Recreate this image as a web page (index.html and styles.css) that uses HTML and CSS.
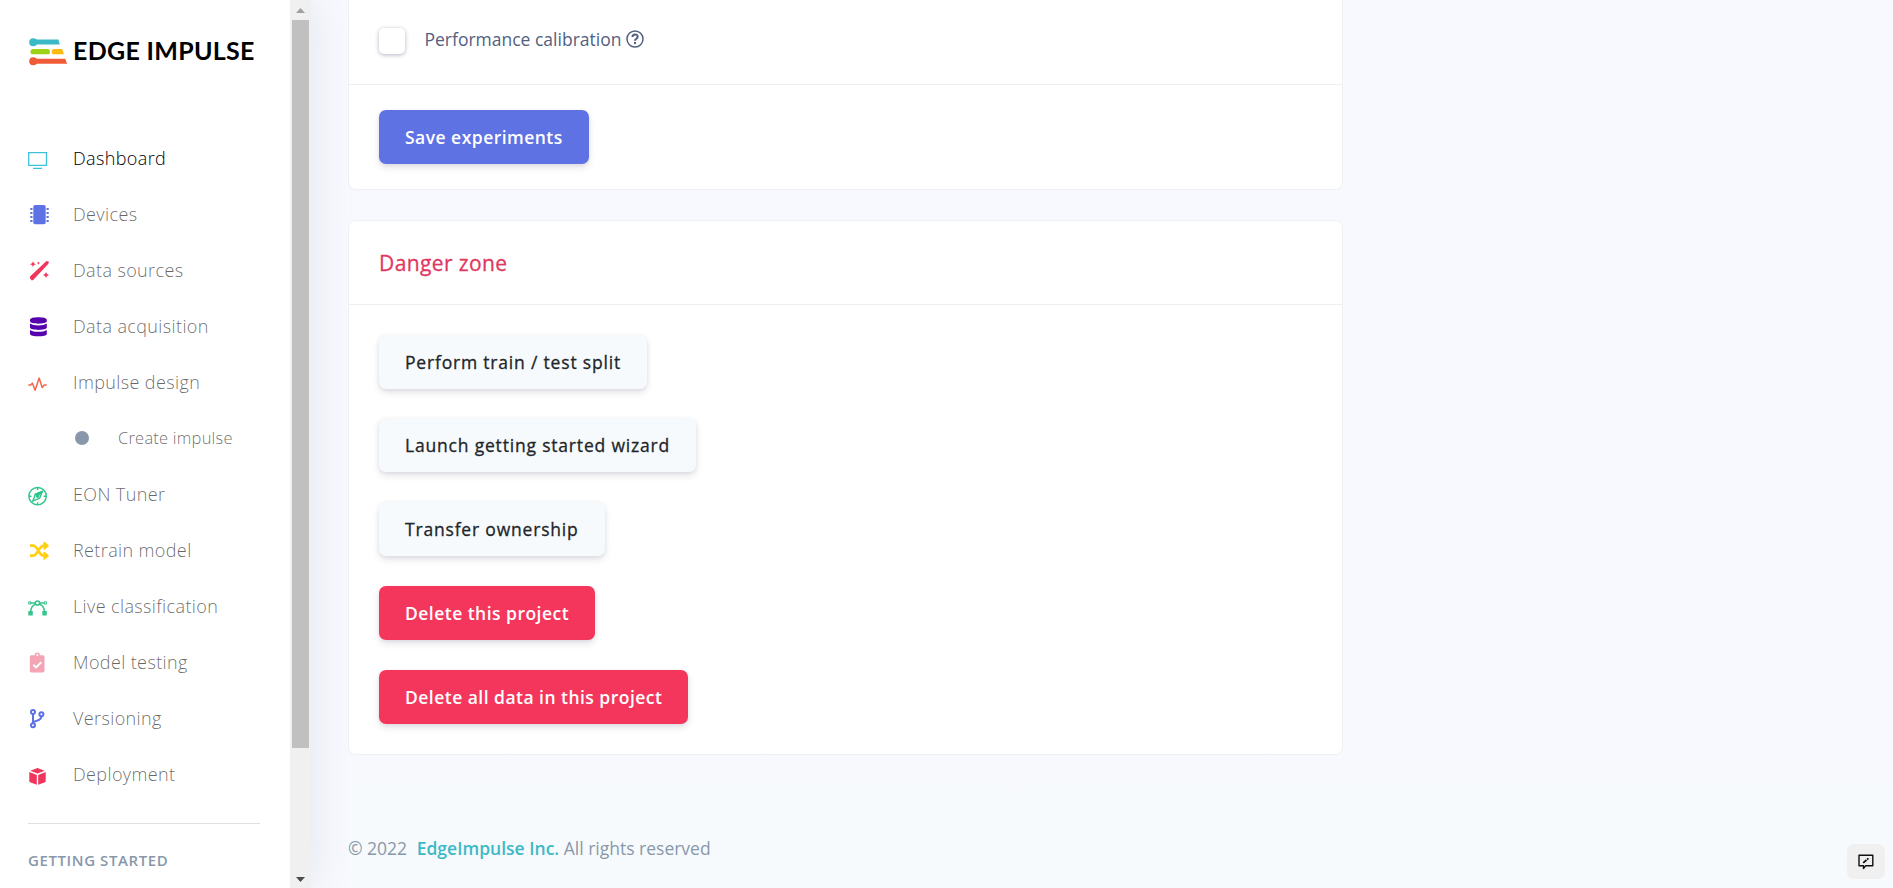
FILE: index.html
```html
<!DOCTYPE html>
<html lang="en">
<head>
<meta charset="utf-8">
<title>Dashboard - Edge Impulse</title>
<link rel="stylesheet" href="styles.css">
</head>
<body>
<div class="app">
  <aside class="sidebar">
    <div class="sidebar-content">
      <a class="brand">
        <svg class="brand-mark" width="39" height="28" viewBox="0 0 39 28">
          <g fill="#3cb9c6"><circle cx="4.2" cy="4.2" r="4"/><path d="M4 1.6h25.4l1.4 5H4z"/></g>
          <rect x="1.5" y="11.1" width="19.5" height="5.2" rx="2.6" fill="#9fd216"/>
          <path d="M25.3 11.1h7.8l1.8 5.2h-9.6a2.6 2.6 0 0 1 0-5.2z" fill="#fcb912"/>
          <g fill="#f15a36"><circle cx="4.2" cy="23.2" r="4"/><path d="M4 20.7h32.2l1.9 5H4z"/></g>
        </svg>
        <span class="brand-name">EDGE IMPULSE</span>
      </a>
      <nav class="nav">
        <a class="nav-item active"><svg class="icon" viewBox="0 0 24 24" fill="none" stroke="#3fc1dc" stroke-width="1.3"><path d="M.7 4.7h17.8v12.6H.7zM5 20.3h9"/></svg><span>Dashboard</span></a>
        <a class="nav-item"><svg class="icon" viewBox="0 0 24 24" fill="#5e72e4"><rect x="5.3" y="1" width="12.4" height="19.3" rx="1.7"/><path d="M2.8 4h1.7v2H2.8l-.7-.5v-1zm0 4h1.7v2H2.8l-.7-.5v-1zm0 4h1.7v2H2.8l-.7-.5v-1zm0 4h1.7v2H2.8l-.7-.5v-1zM18.5 4h1.7l.7.5v1l-.7.5h-1.7zm0 4h1.7l.7.5v1l-.7.5h-1.7zm0 4h1.7l.7.5v1l-.7.5h-1.7zm0 4h1.7l.7.5v1l-.7.5h-1.7z"/></svg><span>Devices</span></a>
        <a class="nav-item"><svg class="icon" viewBox="0 0 24 24" fill="#f0365c"><path d="M2 16.500 18.500 1.100 21 1.700 20.200 4 5.200 20 3.800 20.500 2 18.400zM5 1.200l.9 2.100 2.200.9-2.200.9L5 7.100l-.9-2-2.200-.9 2.200-.9zM10.400 1.500l.5 1.100 1.200.5-1.200.5-.5 1.100-.5-1.100-1.200-.5 1.200-.5zM18 12l1 2.100 2.100.9L19 16l-1 2.100-1-2.100-2-1 2-.9z"/></svg><span>Data sources</span></a>
        <a class="nav-item"><svg class="icon" viewBox="0 0 24 24" fill="#5603ad"><path d="M2 3.600C2 .3 18.800.3 18.800 3.600v1.700c0 3.200-16.800 3.200-16.800 0zM2 7.600c3.500 2.500 13.300 2.500 16.800 0v4c0 3.200-16.800 3.200-16.800 0zM2 13.900c3.500 2.500 13.300 2.500 16.800 0v4c0 3.200-16.800 3.200-16.800 0z"/></svg><span>Data acquisition</span></a>
        <a class="nav-item"><svg class="icon" viewBox="0 0 24 24" fill="none" stroke="#f0684b" stroke-width="1.5" stroke-linejoin="round" stroke-linecap="round"><path d="M.8 13h2l1.500-1.900 2.800 7.200 4-12.200 3.100 9.400 2-2.500h2"/></svg><span>Impulse design</span></a>
        <a class="nav-item nav-sub"><i class="dot"></i><span>Create impulse</span></a>
        <a class="nav-item"><svg class="icon" viewBox="0 0 24 24" fill="none" stroke="#2dc58a" stroke-width="1.4"><circle cx="9.6" cy="12.2" r="8.7"/><path d="M9.600 3.600v2.500M9.600 18.300v2.500M1 12.200h2.500M15.700 12.200h2.500M14.400 7.400l-7 2.800-2.600 6.800 6.800-2.700z"/><path d="M14.400 7.400l-7 2.800 2.200 2z" fill="#2dc58a"/><circle cx="9.6" cy="12.2" r="1"/></svg><span>EON Tuner</span></a>
        <a class="nav-item"><svg class="icon" viewBox="0 0 24 24" fill="none" stroke="#ffd012" stroke-width="2.7"><path d="M2 5.700h3c5 0 5.500 10 11 10h1.500M2 15.700h3c5 0 5.500-10 11-10h1.500"/><path d="M16.300 2.600v6.200l3.600-3.100zM16.300 12.600v6.200l3.600-3.100z" fill="#ffd012" stroke-width="1.8" stroke-linejoin="round"/></svg><span>Retrain model</span></a>
        <a class="nav-item"><svg class="icon" viewBox="0 0 24 24" fill="none" stroke="#38c48d" stroke-width="1.5"><circle cx="9.5" cy="7" r="2.1"/><path d="M2.500 7h4.800M11.700 7h4.800M7.400 8.200C4.300 9.200 2.800 12 2.600 16M11.700 8.200c3.100 1 4.600 3.800 4.800 7.800"/><path d="M.7 5.800h2v2.300h-2zM16.400 5.800h2v2.300h-2z" stroke-width="1"/><path d="M.3 15h4.500v4.400H.3zM14.300 15h4.500v4.400h-4.500z" fill="#38c48d" stroke="none"/></svg><span>Live classification</span></a>
        <a class="nav-item"><svg class="icon" viewBox="0 0 24 24"><path fill="#f3a4b5" fill-rule="evenodd" d="M3.400 3.200h3.300a2.600 2.600 0 0 1 5.200 0h2.900q1.700 0 1.700 1.700v13.900q0 1.700-1.700 1.700H3.500q-1.700 0-1.700-1.700V4.900q0-1.700 1.600-1.700zM9.300 2a1 1 0 1 0 0 2 1 1 0 0 0 0-2z"/><path d="M5.300 12.800 8 15.400l5.300-5.200" fill="none" stroke="#fff" stroke-width="1.9"/></svg><span>Model testing</span></a>
        <a class="nav-item"><svg class="icon" viewBox="0 0 24 24" fill="none" stroke="#5e72e4" stroke-width="2"><circle cx="5" cy="4" r="2"/><circle cx="5" cy="17.3" r="2"/><circle cx="13.4" cy="6.3" r="2"/><path d="M5 6v9.300M13.400 8.300c0 5-6 4.100-8.200 5.800"/></svg><span>Versioning</span></a>
        <a class="nav-item"><svg class="icon" viewBox="0 0 24 24" fill="#f0365c"><path d="M9.500 3.900 16.700 6.800 9.500 9.500 2.200 6.800zM1.300 8.100l7.500 2.800v9.900L2 18.200l-.7-.8zM17.700 8.100v9.300l-.7.8-6.800 2.600v-9.900z"/></svg><span>Deployment</span></a>
      </nav>
      <div class="divider"></div>
      <h6 class="nav-heading">GETTING STARTED</h6>
    </div>
    <div class="scrollbar">
      <svg width="9" height="5" viewBox="0 0 9 5"><path d="M4.500 0 9 5H0z" fill="#a0a0a0"/></svg>
      <div class="thumb"></div>
      <svg class="down" width="9" height="5" viewBox="0 0 9 5"><path d="M0 0h9L4.500 5z" fill="#4c4c4c"/></svg>
    </div>
  </aside>
  <main class="main">
    <section class="card experiments">
      <div class="option">
        <span class="checkbox"></span>
        <span class="option-label">Performance calibration</span>
        <svg class="help" width="18" height="18" viewBox="0 0 18 18" fill="none" stroke="#525f7f"><circle cx="9" cy="9" r="8" stroke-width="1.5"/><path d="M6.400 7C6.600 3.500 11.800 3.700 11.700 6.800c0 1.900-2.700 1.900-2.700 3.900" stroke-width="2"/><circle cx="9" cy="13" r="1.200" fill="#525f7f" stroke="none"/></svg>
      </div>
      <div class="card-footer"><button class="btn primary">Save experiments</button></div>
    </section>
    <section class="card danger-zone">
      <h3 class="card-title">Danger zone</h3>
      <div class="actions">
        <button class="btn light">Perform train / test split</button>
        <button class="btn light">Launch getting started wizard</button>
        <button class="btn light">Transfer ownership</button>
        <button class="btn danger">Delete this project</button>
        <button class="btn danger">Delete all data in this project</button>
      </div>
    </section>
    <footer class="footer">© 2022 <a>EdgeImpulse Inc.</a> All rights reserved</footer>
  </main>
  <button class="feedback" aria-label="Feedback"><svg width="16" height="16" viewBox="0 0 16 16" fill="none" stroke="#111" stroke-width="1.4"><path d="M1 1.200h13.800v10.600H7.500L5.500 14.500v-2.700H1z" stroke-linejoin="round"/><path d="M5.200 8.900 10.500 4.300" stroke-width="1.700" stroke-dasharray="4.400 .8"/></svg></button>
</div>
</body>
</html>
```
FILE: styles.css
```css
* { box-sizing: border-box; }

body {
  margin: 0;
  font-family: "Open Sans", "Noto Sans", sans-serif;
  font-size: 17.5px;
  color: #525f7f;
  background: #f8f9fe;
}

.app {
  display: flex;
  height: 888px;
  overflow: hidden;
}

.sidebar {
  display: flex;
  flex: none;
  width: 311px;
  background: #fff;
  box-shadow: 0 0 40px rgba(136, 152, 170, .2);
}

.sidebar-content {
  flex: none;
  width: 290px;
  padding: 37px 29px 0 28px;
  overflow: hidden;
}

.brand {
  display: flex;
  align-items: center;
  height: 28px;
  margin-bottom: 65px;
  padding-left: 1px;
}

.brand-mark {
  flex: none;
  margin-top: 2px;
}

.brand-name {
  margin: -2px 0 0 5px;
  font-family: Lato, sans-serif;
  font-weight: 700;
  font-size: 25px;
  line-height: 28px;
  letter-spacing: .3px;
  color: #000;
  white-space: nowrap;
}

.nav-item {
  display: flex;
  align-items: center;
  height: 56px;
  font-size: 18px;
  font-weight: 300;
  letter-spacing: .38px;
  color: rgba(0, 0, 0, .6);
  white-space: nowrap;
}

.nav-item.active { color: #000; }

.nav-item .icon {
  flex: none;
  width: 24px;
  height: 24px;
  margin: 4px 21px 0 0;
}

.nav-sub {
  padding-left: 47px;
  font-size: 16.500px;
  letter-spacing: .22px;
}

.nav-sub span { margin-top: -2px; }

.dot {
  width: 14px;
  height: 14px;
  margin-right: 29px;
  border-radius: 50%;
  background: #8898aa;
}

.divider {
  width: 232px;
  height: 1px;
  margin-top: 21px;
  background: #e0e0e0;
}

.nav-heading {
  margin: 25px 0 0;
  font-size: 15px;
  line-height: 22px;
  font-weight: 600;
  letter-spacing: .6px;
  color: #8898aa;
}

.scrollbar {
  display: flex;
  flex-direction: column;
  align-items: center;
  flex: none;
  width: 21px;
  padding: 8px 0 6px;
  background: #f0f0f0;
}

.thumb {
  width: 17px;
  height: 728px;
  margin-top: 7px;
  background: #c0c0c0;
}

.scrollbar .down { margin-top: auto; }

.main {
  width: 995px;
  margin-left: 37px;
}

.card {
  background: #fff;
  border: 1px solid #eef0f3;
  border-radius: 7.500px;
}

.experiments {
  height: 190px;
  border-top: 0;
  border-radius: 0 0 7.500px 7.500px;
}

.option {
  display: flex;
  align-items: flex-start;
  height: 85px;
  padding: 28px 30px 0;
  border-bottom: 1px solid #edeff2;
}

.checkbox {
  width: 26px;
  height: 26px;
  margin-right: 19.500px;
  border-radius: 5px;
  background: #fff;
  box-shadow: 0 1px 4px rgba(50, 50, 93, .36);
}

.option-label {
  margin-top: -1px;
  line-height: 24px;
}

.help {
  margin: 2px 0 0 4.500px;
}

.card-footer { padding: 25px 30px; }

.btn {
  display: block;
  height: 54px;
  padding: 0 26px;
  border: 0;
  border-radius: 7px;
  font: 600 17.500px/54px "Open Sans", sans-serif;
  letter-spacing: .47px;
  white-space: nowrap;
  box-shadow: 0 4px 7px rgba(50, 50, 93, .11), 0 1px 4px rgba(0, 0, 0, .08);
}

.btn.primary { background: #5e72e4; color: #fff; }
.btn.light {
  background: #f7fafc;
  color: #212529;
  font-weight: 500;
  letter-spacing: .81px;
  -webkit-text-stroke: .3px #212529;
}
.btn.danger { background: #f5365c; color: #fff; }

.danger-zone {
  height: 535px;
  margin-top: 30px;
}

.card-title {
  height: 84px;
  margin: 0;
  padding-left: 30px;
  border-bottom: 1px solid #edeff2;
  font-size: 21px;
  font-weight: 500;
  line-height: 84px;
  letter-spacing: .4px;
  -webkit-text-stroke: .3px #e0385f;
  color: #e0385f;
}

.actions {
  display: flex;
  flex-direction: column;
  align-items: flex-start;
  gap: 29.750px;
  padding: 29.600px 30px;
}

.footer {
  width: 1545px;
  height: 133px;
  padding-top: 81px;
  line-height: 24px;
  color: #8898aa;
  background: linear-gradient(#f8f9fe, #f7fafc 45px);
}

.footer a {
  margin-left: 5px;
  font-weight: 600;
  color: #3cb9c6;
}

.feedback {
  position: absolute;
  right: 8px;
  bottom: 9px;
  display: grid;
  place-items: center;
  width: 38px;
  height: 35px;
  padding: 0;
  border: 0;
  border-radius: 7px;
  background: #f0f0f0;
}
```
